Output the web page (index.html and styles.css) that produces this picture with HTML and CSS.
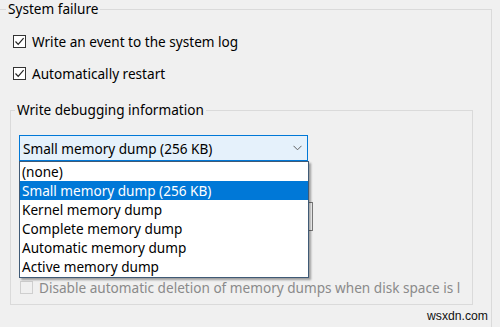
FILE: index.html
```html
<!DOCTYPE html>
<html>
<head>
<meta charset="utf-8">
<link rel="stylesheet" href="styles.css">
</head>
<body>
<fieldset class="group outer">
  <legend class="group-title">System failure</legend>
  <label class="check-row first">
    <span class="box"><svg width="11" height="11" viewBox="0 0 11 11"><path d="M1.5 5.5 L4.2 8.3 L9.6 2.2" fill="none" stroke="#222" stroke-width="1.2"/></svg></span>
    <span class="label">Write an event to the system log</span>
  </label>
  <label class="check-row second">
    <span class="box"><svg width="11" height="11" viewBox="0 0 11 11"><path d="M1.5 5.5 L4.2 8.3 L9.6 2.2" fill="none" stroke="#222" stroke-width="1.2"/></svg></span>
    <span class="label">Automatically restart</span>
  </label>

  <fieldset class="group inner">
    <legend class="group-title">Write debugging information</legend>
    <div class="combo-wrap">
      <div class="combo">
        <span class="combo-text">Small memory dump (256 KB)</span>
        <svg class="chev" width="9" height="6" viewBox="0 0 9 6"><path d="M0.5 0.8 L4.5 4.8 L8.5 0.8" fill="none" stroke="#606060" stroke-width="1"/></svg>
      </div>
      <ul class="dropdown">
        <li>(none)</li>
        <li class="selected">Small memory dump (256 KB)</li>
        <li>Kernel memory dump</li>
        <li>Complete memory dump</li>
        <li>Automatic memory dump</li>
        <li>Active memory dump</li>
      </ul>
    </div>
    <div class="textbox"></div>
    <label class="check-row disabled">
      <span class="box"></span>
      <span class="label">Disable automatic deletion of memory dumps when disk space is low</span>
    </label>
  </fieldset>
</fieldset>
<div class="watermark">wsxdn.com</div>
</body>
</html>
```
FILE: styles.css
```css
html, body {
  margin: 0;
  padding: 0;
  width: 500px;
  height: 327px;
  overflow: hidden;
  background: #f0f0f0;
  font-family: "Noto Sans", "Open Sans", sans-serif;
  font-size: 13.6px;
  color: #000;
}
body {
  position: relative;
}
.group {
  border: 1px solid #dadada;
  margin: 0;
  min-width: 0;
}
.outer {
  margin: 0 8px 0 -4px;
  padding: 0 0 0 16px;
  height: 327px;
  border-bottom: none;
  box-sizing: border-box;
  overflow: hidden;
}
.group-title {
  padding: 0 2px;
  line-height: 18px;
}
.outer > .group-title {
  margin-left: -7px;
}
.check-row {
  display: flex;
  align-items: center;
  gap: 6px;
  line-height: 19px;
  white-space: nowrap;
}
.check-row.first {
  margin-top: 14px;
}
.check-row.second {
  margin-top: 13px;
}
.box {
  width: 13px;
  height: 13px;
  border: 1px solid #333;
  background: #fff;
  box-sizing: border-box;
  display: flex;
  align-items: center;
  justify-content: center;
  flex: none;
}
.box svg { display: block; }
.inner {
  margin: 18px 18px 0 -3px;
  padding: 0 0 0 8px;
  height: 204px;
  box-sizing: border-box;
  overflow: hidden;
}
.inner > .group-title {
  margin-left: -4px;
}
.combo-wrap {
  position: relative;
  margin-top: 16px;
  width: 289px;
}
.combo {
  height: 26px;
  box-sizing: border-box;
  border: 1px solid #0078d7;
  background: #e5f1fb;
  display: flex;
  align-items: center;
  justify-content: space-between;
  padding: 0 5px 0 3px;
}
.chev { display: block; }
.dropdown {
  position: absolute;
  left: 0;
  top: 26px;
  width: 288px;
  margin: 0;
  padding: 0 0 1px;
  list-style: none;
  background: #fff;
  border: 1px solid #3f5a76;
  box-shadow: 2px 2px 2px rgba(0,0,0,0.35);
  z-index: 2;
}
.dropdown li {
  line-height: 19px;
  height: 19px;
  padding-left: 2px;
  white-space: nowrap;
}
.dropdown li.selected {
  background: #0078d7;
  color: #fff;
}
.textbox {
  margin-top: 41px;
  width: 294px;
  height: 29px;
  box-sizing: border-box;
  border: 1px solid #7a7a7a;
  background: #fff;
}
.check-row.disabled {
  margin-top: 47px;
  margin-left: 1px;
  color: #8a8a8a;
  width: 440px;
  overflow: hidden;
}
.check-row.disabled .box {
  border-color: #cfcfcf;
  background: #f0f0f0;
}
.check-row.disabled .label {
  overflow: hidden;
}
.watermark {
  position: absolute;
  left: 427px;
  top: 310px;
  font-family: "Liberation Sans", sans-serif;
  font-size: 12.2px;
  line-height: 12px;
  color: #111;
}
```
